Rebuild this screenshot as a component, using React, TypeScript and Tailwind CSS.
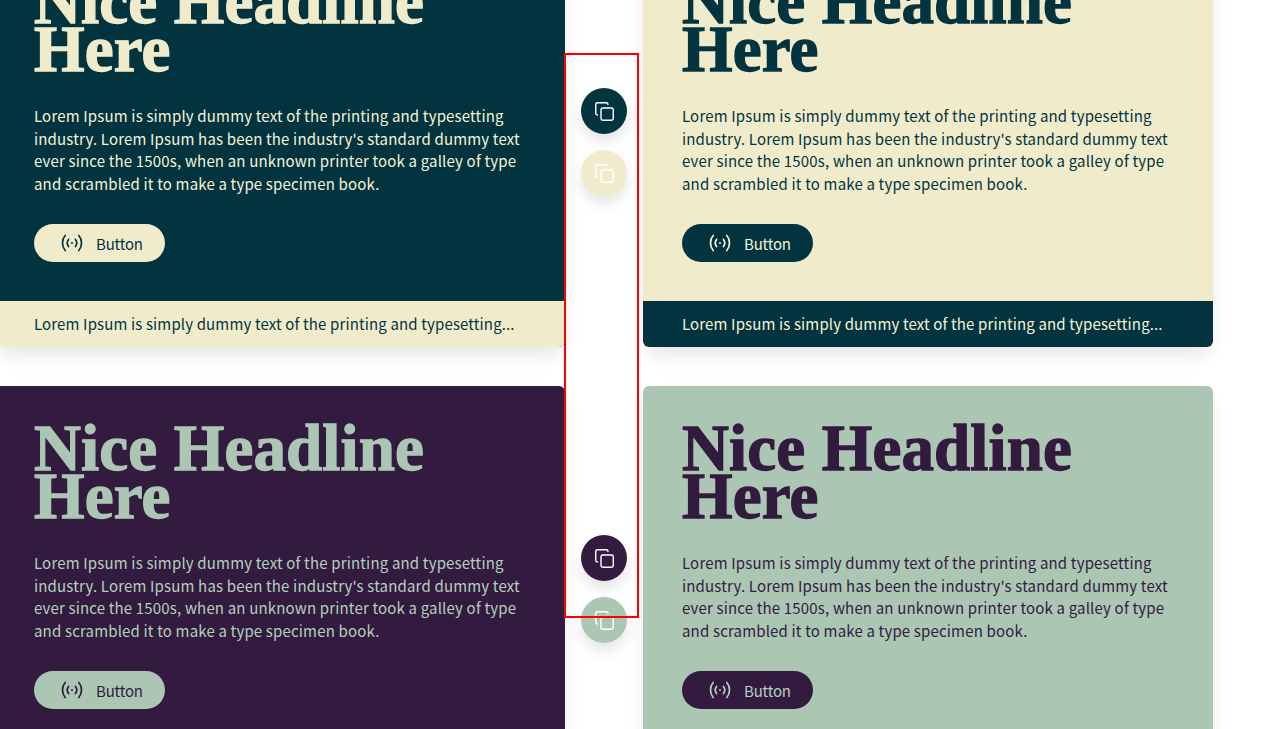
import { Copy } from "lucide-react";

const TEXT =
  "Lorem Ipsum is simply dummy text of the printing and typesetting industry. Lorem Ipsum has been the industry's standard dummy text ever since the 1500s, when an unknown printer took a galley of type and scrambled it to make a type specimen book.";
const SHORT = "Lorem Ipsum is simply dummy text of the printing and typesetting...";

function WaveIcon() {
  return (
    <svg width="24" height="24" viewBox="0 0 24 24" fill="none" stroke="currentColor" strokeWidth="1.7" strokeLinecap="round">
      <path d="M5.2 4.5C1.6 8.5 1.6 15.5 5.2 19.5" />
      <path d="M8.6 8.5C7 10.5 7 13.5 8.6 15.5" />
      <path d="M15.4 8.5C17 10.5 17 13.5 15.4 15.5" />
      <path d="M18.8 4.5C22.4 8.5 22.4 15.5 18.8 19.5" />
      <circle cx="12" cy="12" r="1" fill="currentColor" stroke="none" />
    </svg>
  );
}

function CardDarkTeal() {
  return (
    <div className="rounded-md overflow-hidden shadow-[0_10px_20px_-4px_rgba(0,0,0,0.12)] bg-[#023440]">
      <div className="h-[362px] px-[39px] pt-[38px]">
        <h2 className="headline text-[#f0eccb]">Nice Headline<br />Here</h2>
        <p className="mt-[32px] text-[15px] leading-[22.5px] tracking-[0.17px] text-[#f6f3d6]">{TEXT}</p>
        <button className="mt-[29px] w-[131px] h-[38px] rounded-full bg-[#f0eccb] text-[#023440] text-[15px] tracking-[-0.2px] flex items-center pl-[26px] gap-[12px]"><WaveIcon /><span className="pt-[2px]">Button</span></button>
      </div>
      <div className="h-[46px] px-[39px] flex items-center bg-[#f0eccb] text-[#023440] text-[15px] tracking-[0.14px] whitespace-nowrap">{SHORT}</div>
    </div>
  );
}

function CardBeige() {
  return (
    <div className="rounded-md overflow-hidden shadow-[0_10px_20px_-4px_rgba(0,0,0,0.12)] bg-[#f0eccb]">
      <div className="h-[362px] px-[39px] pt-[38px]">
        <h2 className="headline text-[#023440]">Nice Headline<br />Here</h2>
        <p className="mt-[32px] text-[15px] leading-[22.5px] tracking-[0.17px] text-[#023440]">{TEXT}</p>
        <button className="mt-[29px] w-[131px] h-[38px] rounded-full bg-[#023440] text-[#f6f3d6] text-[15px] tracking-[-0.2px] flex items-center pl-[26px] gap-[12px]"><WaveIcon /><span className="pt-[2px]">Button</span></button>
      </div>
      <div className="h-[46px] px-[39px] flex items-center bg-[#023440] text-[#f6f3d6] text-[15px] tracking-[0.14px] whitespace-nowrap">{SHORT}</div>
    </div>
  );
}

function CardPurple() {
  return (
    <div className="rounded-md overflow-hidden shadow-[0_10px_20px_-4px_rgba(0,0,0,0.12)] bg-[#321b3f]">
      <div className="h-[362px] px-[39px] pt-[38px]">
        <h2 className="headline text-[#acc6b4]">Nice Headline<br />Here</h2>
        <p className="mt-[32px] text-[15px] leading-[22.5px] tracking-[0.17px] text-[#b6d0be]">{TEXT}</p>
        <button className="mt-[29px] w-[131px] h-[38px] rounded-full bg-[#acc6b4] text-[#321b3f] text-[15px] tracking-[-0.2px] flex items-center pl-[26px] gap-[12px]"><WaveIcon /><span className="pt-[2px]">Button</span></button>
      </div>
    </div>
  );
}

function CardGreen() {
  return (
    <div className="rounded-md overflow-hidden shadow-[0_10px_20px_-4px_rgba(0,0,0,0.12)] bg-[#acc6b4]">
      <div className="h-[362px] px-[39px] pt-[38px]">
        <h2 className="headline text-[#321b3f]">Nice Headline<br />Here</h2>
        <p className="mt-[32px] text-[15px] leading-[22.5px] tracking-[0.17px] text-[#321b3f]">{TEXT}</p>
        <button className="mt-[29px] w-[131px] h-[38px] rounded-full bg-[#321b3f] text-[#b6d0be] text-[15px] tracking-[-0.2px] flex items-center pl-[26px] gap-[12px]"><WaveIcon /><span className="pt-[2px]">Button</span></button>
      </div>
    </div>
  );
}

function Swatches({ first, second }: { first: string; second: string }) {
  return (
    <div className="flex flex-col items-center gap-4 pt-[149px]">
      <div className={"w-[46px] h-[46px] rounded-full flex items-center justify-center text-white shadow-[0_8px_14px_rgba(0,0,0,0.1)] " + first}><Copy size={21} strokeWidth={1.6} /></div>
      <div className={"w-[46px] h-[46px] rounded-full flex items-center justify-center text-white shadow-[0_8px_14px_rgba(0,0,0,0.1)] " + second}><Copy size={21} strokeWidth={1.6} /></div>
    </div>
  );
}

export default function App() {
  return (
    <div className="relative h-[729px] w-[1280px] overflow-hidden bg-white font-['Noto_Sans_CJK_KR','Noto_Sans',sans-serif]">
      <style>{`.headline{font-family:'Liberation Serif',serif;font-weight:700;font-size:65px;line-height:48px;letter-spacing:0.15px;-webkit-text-stroke:1.3px currentColor}`}</style>
      <div className="-mt-[61px] -ml-[5px] grid grid-cols-[570px_78px_570px] gap-y-[39px] w-max">
        <CardDarkTeal />
        <Swatches first="bg-[#023440]" second="bg-[#f0eccb]" />
        <CardBeige />
        <CardPurple />
        <Swatches first="bg-[#321b3f]" second="bg-[#acc6b4]" />
        <CardGreen />
      </div>
      <div className="absolute left-[564px] top-[53px] w-[75px] h-[565px] border-2 border-[#ff0000]" />
    </div>
  );
}
